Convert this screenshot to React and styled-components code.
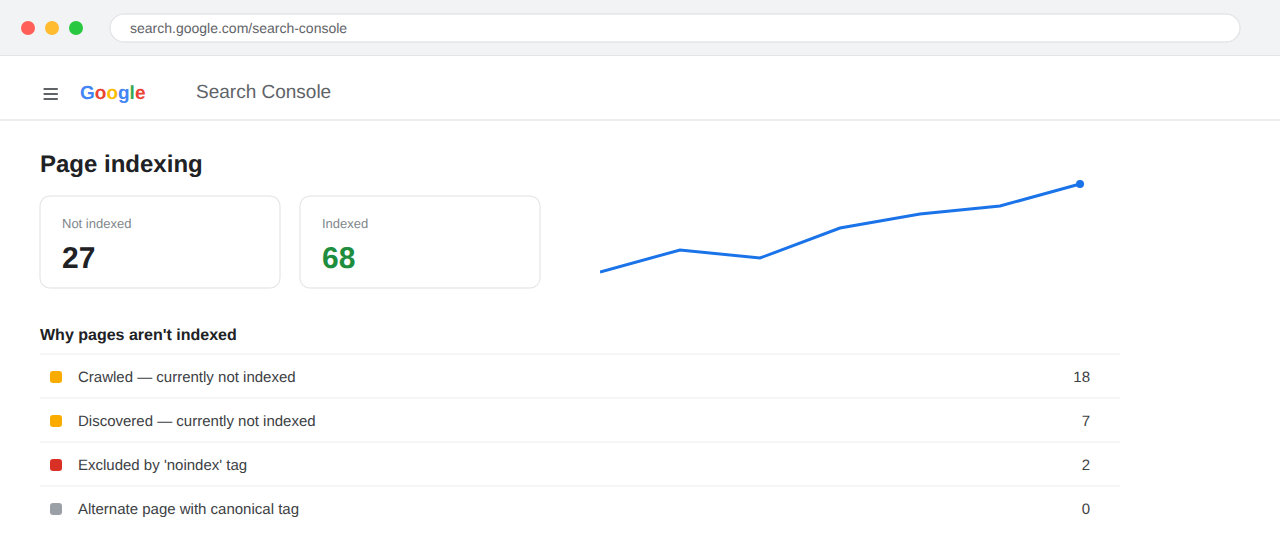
import React from "react";
import styled, { createGlobalStyle } from "styled-components";

const stats = [
  { label: "Not indexed", value: 27, color: "#202124" },
  { label: "Indexed", value: 68, color: "#1e8e3e" },
];

const reasons = [
  { text: "Crawled — currently not indexed", count: 18, color: "#f9ab00" },
  { text: "Discovered — currently not indexed", count: 7, color: "#f9ab00" },
  { text: "Excluded by 'noindex' tag", count: 2, color: "#d93025" },
  { text: "Alternate page with canonical tag", count: 0, color: "#9aa0a6" },
];

const logo = [
  ["G", "#4285f4"],
  ["o", "#ea4335"],
  ["o", "#fbbc05"],
  ["g", "#4285f4"],
  ["l", "#34a853"],
  ["e", "#ea4335"],
];

function App() {
  return (
    <Page>
      <GlobalStyle />

      {/* Browser bar */}
      <BrowserBar>
        <Dots>
          <Dot $color="#ff5f57" />
          <Dot $color="#febc2e" />
          <Dot $color="#28c840" />
        </Dots>
        <AddressBar>search.google.com/search-console</AddressBar>
      </BrowserBar>

      {/* App header */}
      <Header>
        <MenuIcon viewBox="0 0 16 12">
          <path d="M0.6 1h14.2M0.6 6h14.2M0.6 11h14.2" />
        </MenuIcon>
        <Logo>
          {logo.map(([letter, color], i) => (
            <LogoLetter key={i} $color={color}>
              {letter}
            </LogoLetter>
          ))}
        </Logo>
        <ProductName>Search Console</ProductName>
      </Header>

      <Main>
        <Summary>
          <div>
            <PageTitle>Page indexing</PageTitle>
            <Cards>
              {stats.map((stat) => (
                <Card key={stat.label}>
                  <CardLabel>{stat.label}</CardLabel>
                  <CardValue $color={stat.color}>{stat.value}</CardValue>
                </Card>
              ))}
            </Cards>
          </div>
          <Chart viewBox="600 170 490 110">
            <polyline points="600,272 680,250 760,258 840,228 920,214 1000,206 1080,184" />
            <circle cx="1080" cy="184" r="4" />
          </Chart>
        </Summary>

        {/* Reasons list */}
        <SectionTitle>Why pages aren't indexed</SectionTitle>
        <List>
          {reasons.map((reason) => (
            <Row key={reason.text}>
              <Marker $color={reason.color} />
              <RowText>{reason.text}</RowText>
              <RowCount>{reason.count}</RowCount>
            </Row>
          ))}
        </List>
      </Main>
    </Page>
  );
}

export default App;

const GlobalStyle = createGlobalStyle`
  body {
    margin: 0;
    background: #ffffff;
    font-family: "Liberation Sans", Arial, sans-serif;
    text-rendering: geometricPrecision;
  }

  * {
    box-sizing: border-box;
  }
`;

const Page = styled.div`
  width: 1280px;
  height: 560px;
  overflow: hidden;
`;

const BrowserBar = styled.div`
  display: flex;
  align-items: center;
  height: 56px;
  padding: 1px 40px 0 21px;
  background: #f1f3f4;
  border-bottom: 1px solid #e3e5e7;
`;

const Dots = styled.div`
  display: flex;
  gap: 10px;
  margin-right: 27px;
`;

const Dot = styled.span`
  width: 14px;
  height: 14px;
  border-radius: 50%;
  background: ${(props) => props.$color};
`;

const AddressBar = styled.div`
  flex: 1;
  height: 28px;
  padding-left: 20px;
  border-radius: 14px;
  background: #ffffff;
  box-shadow: 0 0 0 0.5px #dadce0, inset 0 0 0 0.5px #dadce0;
  color: #5f6368;
  font-size: 14px;
  line-height: 28px;
`;

const Header = styled.header`
  display: flex;
  align-items: flex-start;
  height: 65px;
  padding-left: 43px;
  border-bottom: 2px solid #ededed;
`;

const MenuIcon = styled.svg`
  width: 16px;
  height: 12px;
  margin-top: 32px;
  fill: none;
  stroke: #5f6368;
  stroke-width: 1.9;
`;

const Logo = styled.div`
  width: 116px;
  margin: 27px 0 0 21px;
  font-size: 19px;
  font-weight: bold;
  line-height: 22px;
`;

const LogoLetter = styled.span`
  color: ${(props) => props.$color};
`;

const ProductName = styled.div`
  margin-top: 26px;
  color: #5f6368;
  font-size: 19px;
  line-height: 22px;
`;

const Main = styled.main`
  width: 1120px;
  padding: 29px 0 0 40px;
`;

const Summary = styled.section`
  display: flex;
  align-items: flex-start;
  gap: 60px;
`;

const PageTitle = styled.h1`
  margin: 0;
  color: #202124;
  font-size: 24px;
  font-weight: bold;
  line-height: 30px;
`;

const Cards = styled.div`
  display: flex;
  gap: 20px;
  margin-top: 16px;
`;

const Card = styled.div`
  width: 240px;
  height: 92px;
  padding: 20px 22px;
  border-radius: 10px;
  box-shadow: 0 0 0 0.5px #e0e0e0, inset 0 0 0 0.5px #e0e0e0;
`;

const CardLabel = styled.div`
  color: #80868b;
  font-size: 13px;
  line-height: 16px;
`;

const CardValue = styled.div`
  margin-top: 10px;
  color: ${(props) => props.$color};
  font-size: 30px;
  font-weight: bold;
  line-height: 34px;
`;

const Chart = styled.svg`
  width: 490px;
  height: 110px;
  margin-top: 20px;
  fill: #1a73e8;

  polyline {
    fill: none;
    stroke: #1a73e8;
    stroke-width: 3;
  }
`;

const SectionTitle = styled.h2`
  margin: 38px 0 0;
  color: #202124;
  font-size: 16px;
  font-weight: bold;
  line-height: 20px;
`;

const List = styled.div`
  margin-top: 7px;
`;

const Row = styled.div`
  display: flex;
  align-items: center;
  height: 44px;
  padding: 2px 30px 0 10px;
  border-top: 2px solid #f6f6f6;
  color: #3c4043;
  font-size: 15px;
`;

const Marker = styled.span`
  width: 12px;
  height: 12px;
  margin-right: 16px;
  border-radius: 3px;
  background: ${(props) => props.$color};
`;

const RowText = styled.span`
  flex: 1;
`;

const RowCount = styled.span`
  text-align: right;
`;
